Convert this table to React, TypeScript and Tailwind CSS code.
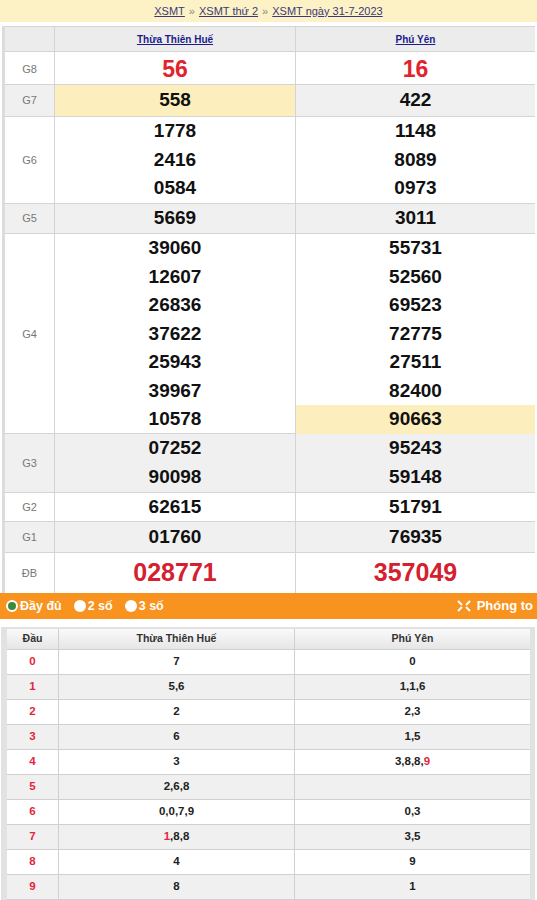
import React from "react";

const FONT = { fontFamily: '"Liberation Sans", Arial, sans-serif' };

type Prize = {
  label: string;
  h: string;
  a: string[];
  b: string[];
  big?: boolean;
  bg: string;
};

const prizes: Prize[] = [
  { label: "G8", h: "h-[33px]", a: ["56"], b: ["16"], big: true, bg: "bg-white" },
  { label: "G7", h: "h-[32px]", a: ["558"], b: ["422"], bg: "bg-[#f0f0f0]" },
  { label: "G6", h: "h-[87px]", a: ["1778", "2416", "0584"], b: ["1148", "8089", "0973"], bg: "bg-white" },
  { label: "G5", h: "h-[30px]", a: ["5669"], b: ["3011"], bg: "bg-[#f0f0f0]" },
  {
    label: "G4",
    h: "h-[200px]",
    a: ["39060", "12607", "26836", "37622", "25943", "39967", "10578"],
    b: ["55731", "52560", "69523", "72775", "27511", "82400", "90663"],
    bg: "bg-white",
  },
  { label: "G3", h: "h-[59px]", a: ["07252", "90098"], b: ["95243", "59148"], bg: "bg-[#f0f0f0]" },
  { label: "G2", h: "h-[29px]", a: ["62615"], b: ["51791"], bg: "bg-white" },
  { label: "G1", h: "h-[31px]", a: ["01760"], b: ["76935"], bg: "bg-[#f0f0f0]" },
];

// loto heads: [head, hue col, phu yen col]
const loto: [string, React.ReactNode, React.ReactNode][] = [
  ["0", "7", "0"],
  ["1", "5,6", "1,1,6"],
  ["2", "2", "2,3"],
  ["3", "6", "1,5"],
  ["4", "3", <>3,8,8,<span className="text-[#e3263b]">9</span></>],
  ["5", "2,6,8", ""],
  ["6", "0,0,7,9", "0,3"],
  ["7", <><span className="text-[#e3263b]">1</span>,8,8</>, "3,5"],
  ["8", "4", "9"],
  ["9", "8", "1"],
];

function Lines({ nums, highlightA, highlightLast }: { nums: string[]; highlightA?: boolean; highlightLast?: boolean }) {
  return (
    <div className={`flex flex-col h-full ${highlightA ? "bg-[#fcefbd]" : ""}`}>
      {nums.map((n, i) => (
        <div
          key={i}
          className={`flex-1 flex items-center justify-center text-[19px] font-bold text-[#111] ${
            highlightLast && i === nums.length - 1 ? "bg-[#fcefbd]" : ""
          }`}
        >
          {n}
        </div>
      ))}
    </div>
  );
}

function Radio({ on, label }: { on?: boolean; label: string }) {
  return (
    <div className="flex items-center gap-[2px]">
      <span
        className={`w-[12px] h-[12px] rounded-full ${on ? "bg-[#3d8a3d] border-[2px] border-white" : "bg-white"}`}
      />
      <span className="text-[12.5px] font-bold text-white">{label}</span>
    </div>
  );
}

export default function App() {
  return (
    <div className="w-[537px] h-[900px] bg-white overflow-hidden" style={FONT}>
      {/* breadcrumb */}
      <div className="h-[22px] bg-[#fdf1c6] flex items-center justify-center gap-[4px] text-[11px] text-[#3a3a7a]">
        <span className="underline">XSMT</span>
        <span className="text-[#888]">»</span>
        <span className="underline">XSMT thứ 2</span>
        <span className="text-[#888]">»</span>
        <span className="underline">XSMT ngày 31-7-2023</span>
      </div>

      {/* results table */}
      <div className="mt-[4px] ml-[2px] w-[533px] border-l-[3px] border-[#dcdcdc]">
        <div className="grid grid-cols-[50px_241px_1fr] h-[26px] bg-[#ececec] border-b border-t border-[#d4d4d4]">
          <div className="border-r border-[#d4d4d4]" />
          <div className="border-r border-[#d4d4d4] flex items-center justify-center text-[10px] font-bold underline text-[#1c1c8c]">
            Thừa Thiên Huế
          </div>
          <div className="flex items-center justify-center text-[10px] font-bold underline text-[#1c1c8c]">Phú Yên</div>
        </div>

        {prizes.map((p) => (
          <div key={p.label} className={`grid grid-cols-[50px_241px_1fr] ${p.h} ${p.bg} border-b border-[#d4d4d4]`}>
            <div className="border-r border-[#d4d4d4] flex items-center justify-center text-[11px] text-[#777]">
              {p.label}
            </div>
            <div className="border-r border-[#d4d4d4]">
              {p.big ? (
                <div className="h-full flex items-center justify-center text-[23px] font-bold text-[#e3232b]">{p.a[0]}</div>
              ) : (
                <Lines nums={p.a} highlightA={p.label === "G7"} />
              )}
            </div>
            <div>
              {p.big ? (
                <div className="h-full flex items-center justify-center text-[23px] font-bold text-[#e3232b]">{p.b[0]}</div>
              ) : (
                <Lines nums={p.b} highlightLast={p.label === "G4"} />
              )}
            </div>
          </div>
        ))}

        <div className="grid grid-cols-[50px_241px_1fr] h-[40px] bg-white">
          <div className="border-r border-[#d4d4d4] flex items-center justify-center text-[11px] text-[#777]">ĐB</div>
          <div className="border-r border-[#d4d4d4] flex items-center justify-center text-[25px] font-bold text-[#d4202f]">
            028771
          </div>
          <div className="flex items-center justify-center text-[25px] font-bold text-[#d4202f]">357049</div>
        </div>
      </div>

      {/* options bar */}
      <div className="h-[26px] bg-[#f7931e] flex items-center justify-between pl-[6px] pr-[4px]">
        <div className="flex items-center gap-[12px]">
          <Radio on label="Đầy đủ" />
          <Radio label="2 số" />
          <Radio label="3 số" />
        </div>
        <div className="flex items-center gap-[6px]">
          <svg width="14" height="12" viewBox="0 0 14 12" fill="none" stroke="white" strokeWidth="2">
            <path d="M1 1 L5 5 M13 1 L9 5 M1 11 L5 7 M13 11 L9 7" />
          </svg>
          <span className="text-[13px] font-bold text-white">Phóng to</span>
        </div>
      </div>

      {/* loto table */}
      <div className="mt-[8px] ml-[1px] w-[534px] bg-[#e2e2e2] pl-[6px] pr-[5px] pt-[2px]">
        <div className="grid grid-cols-[52px_236px_1fr] h-[21px] bg-gradient-to-b from-[#fafafa] to-[#e6e6e6] border-b border-[#d0d0d0] text-[10.5px] font-bold text-[#333]">
          <div className="border-r border-[#d0d0d0] flex items-center justify-center">Đầu</div>
          <div className="border-r border-[#d0d0d0] flex items-center justify-center">Thừa Thiên Huế</div>
          <div className="flex items-center justify-center">Phú Yên</div>
        </div>
        {loto.map(([d, a, b], i) => (
          <div
            key={d}
            className={`grid grid-cols-[52px_236px_1fr] h-[25px] border-b border-[#d0d0d0] text-[11.5px] font-bold text-[#222] ${
              i % 2 === 0 ? "bg-white" : "bg-[#f0f0f0]"
            }`}
          >
            <div className="border-r border-[#d0d0d0] flex items-center justify-center text-[#e3263b]">{d}</div>
            <div className="border-r border-[#d0d0d0] flex items-center justify-center">{a}</div>
            <div className="flex items-center justify-center">{b}</div>
          </div>
        ))}
      </div>
    </div>
  );
}
